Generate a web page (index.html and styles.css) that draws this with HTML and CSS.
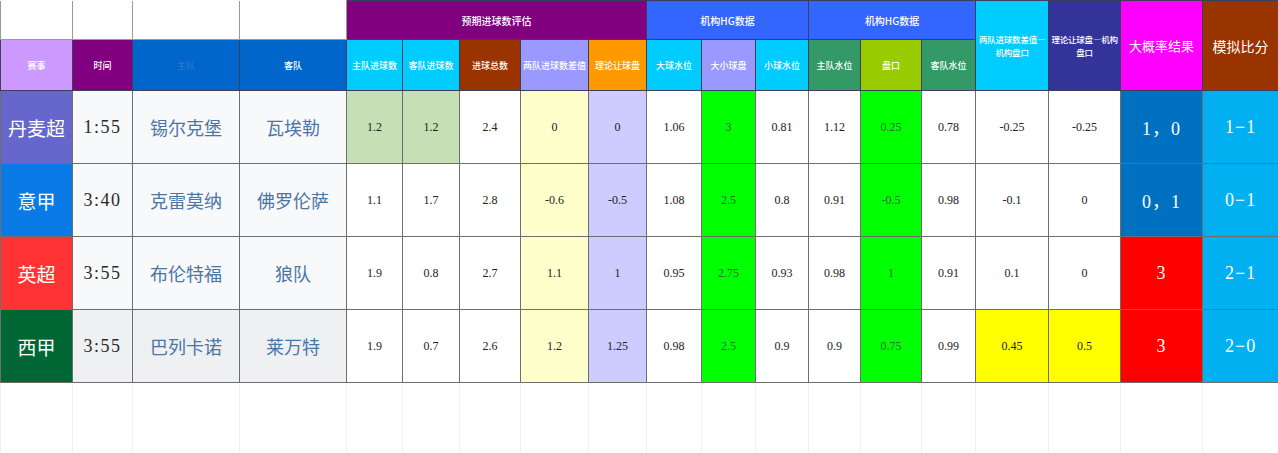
FILE: index.html
```html
<!DOCTYPE html>
<html lang="zh">
<head>
<meta charset="utf-8">
<title>预期进球数评估</title>
<link rel="stylesheet" href="styles.css">
</head>
<body>
<table class="sheet">
  <colgroup>
    <col style="width:72px"><col style="width:60px"><col style="width:107px"><col style="width:107px">
    <col style="width:56px"><col style="width:57px"><col style="width:61px"><col style="width:68px"><col style="width:58px">
    <col style="width:55px"><col style="width:54px"><col style="width:53px">
    <col style="width:52px"><col style="width:61px"><col style="width:54px">
    <col style="width:73px"><col style="width:72px"><col style="width:82px"><col style="width:76px">
  </colgroup>
  <thead>
    <tr class="h1">
      <th class="blank"></th><th class="blank"></th><th class="blank"></th><th class="blank"></th>
      <th colspan="5" class="g-purple">预期进球数评估</th>
      <th colspan="3" class="g-blue">机构HG数据</th>
      <th colspan="3" class="g-blue">机构HG数据</th>
      <th rowspan="2" class="c-cyan two">两队进球数差值—<br>机构盘口</th>
      <th rowspan="2" class="c-navy two">理论让球盘—机构<br>盘口</th>
      <th rowspan="2" class="c-magenta big">大概率结果</th>
      <th rowspan="2" class="c-brown bigger">模拟比分</th>
    </tr>
    <tr class="h2">
      <th class="c-lilac">赛事</th>
      <th class="c-purple">时间</th>
      <th class="c-teamblue faint">主队</th>
      <th class="c-teamblue">客队</th>
      <th class="c-sky">主队进球数</th>
      <th class="c-sky">客队进球数</th>
      <th class="c-brown">进球总数</th>
      <th class="c-periwinkle">两队进球数差值</th>
      <th class="c-orange">理论让球盘</th>
      <th class="c-sky">大球水位</th>
      <th class="c-periwinkle">大小球盘</th>
      <th class="c-sky">小球水位</th>
      <th class="c-sea">主队水位</th>
      <th class="c-lime">盘口</th>
      <th class="c-sea">客队水位</th>
    </tr>
  </thead>
  <tbody>
    <tr class="r">
      <td class="lg lg-dk">丹麦超</td><td class="time">1:55</td><td class="team">锡尔克堡</td><td class="team">瓦埃勒</td>
      <td class="num sage">1.2</td><td class="num sage">1.2</td><td class="num">2.4</td><td class="num cream">0</td><td class="num lav">0</td>
      <td class="num">1.06</td><td class="num green">3</td><td class="num">0.81</td>
      <td class="num">1.12</td><td class="num green">0.25</td><td class="num">0.78</td>
      <td class="num">-0.25</td><td class="num">-0.25</td>
      <td class="res res-blue">1，0</td><td class="res score">1−1</td>
    </tr>
    <tr class="r">
      <td class="lg lg-it">意甲</td><td class="time">3:40</td><td class="team">克雷莫纳</td><td class="team">佛罗伦萨</td>
      <td class="num">1.1</td><td class="num">1.7</td><td class="num">2.8</td><td class="num cream">-0.6</td><td class="num lav">-0.5</td>
      <td class="num">1.08</td><td class="num green">2.5</td><td class="num">0.8</td>
      <td class="num">0.91</td><td class="num green">-0.5</td><td class="num">0.98</td>
      <td class="num">-0.1</td><td class="num">0</td>
      <td class="res res-blue">0，1</td><td class="res score">0−1</td>
    </tr>
    <tr class="r">
      <td class="lg lg-en">英超</td><td class="time">3:55</td><td class="team">布伦特福</td><td class="team">狼队</td>
      <td class="num">1.9</td><td class="num">0.8</td><td class="num">2.7</td><td class="num cream">1.1</td><td class="num lav">1</td>
      <td class="num">0.95</td><td class="num green">2.75</td><td class="num">0.93</td>
      <td class="num">0.98</td><td class="num green">1</td><td class="num">0.91</td>
      <td class="num">0.1</td><td class="num">0</td>
      <td class="res res-red">3</td><td class="res score">2−1</td>
    </tr>
    <tr class="r last">
      <td class="lg lg-es">西甲</td><td class="time alt">3:55</td><td class="team alt">巴列卡诺</td><td class="team alt">莱万特</td>
      <td class="num">1.9</td><td class="num">0.7</td><td class="num">2.6</td><td class="num cream">1.2</td><td class="num lav">1.25</td>
      <td class="num">0.98</td><td class="num green">2.5</td><td class="num">0.9</td>
      <td class="num">0.9</td><td class="num green">0.75</td><td class="num">0.99</td>
      <td class="num yellow">0.45</td><td class="num yellow">0.5</td>
      <td class="res res-red">3</td><td class="res score">2−0</td>
    </tr>
    <tr class="empty">
      <td></td><td></td><td></td><td></td><td></td><td></td><td></td><td></td><td></td><td></td>
      <td></td><td></td><td></td><td></td><td></td><td></td><td></td><td></td><td></td>
    </tr>
  </tbody>
</table>
</body>
</html>
```
FILE: styles.css
```css
html, body {
  margin: 0;
  padding: 0;
  background: #ffffff;
}
body {
  font-family: "Liberation Serif", "Noto Sans CJK SC", serif;
  overflow: hidden;
}
.sheet {
  width: 1278px;
  table-layout: fixed;
  border-collapse: collapse;
  border-spacing: 0;
}
.sheet th, .sheet td {
  padding: 0;
  text-align: center;
  vertical-align: middle;
  overflow: hidden;
  white-space: nowrap;
}
.sheet th {
  font-family: "Noto Sans CJK SC", sans-serif;
  font-weight: 500;
  color: #ffffff;
  font-size: 9px;
  border: 1px solid #3d3d5c;
}
.h1 { height: 39px; }
.h2 { height: 51px; }
.h1 th { font-size: 10px; }
.h1 th.blank {
  background: #ffffff;
  border: 1px solid #9a9a9a;
  border-top: none;
}
.g-purple { background: #800080; }
.g-blue { background: #3366ff; }
.c-cyan { background: #00ccff; }
.c-navy { background: #333399; }
.c-magenta { background: #ff00ff; }
.c-brown { background: #993300; }
.c-lilac { background: #cc99ff; }
.c-purple { background: #800080; }
.c-teamblue { background: #0066cc; }
.c-sky { background: #00ccff; }
.c-periwinkle { background: #9999ff; }
.c-orange { background: #ff9900; }
.c-sea { background: #339966; }
.c-lime { background: #99cc00; }
.sheet th.two {
  white-space: nowrap;
  font-size: 8.5px;
  line-height: 13px;
  letter-spacing: -0.2px;
}
.sheet th.big { font-size: 13px; font-weight: 400; }
.sheet th.bigger { font-size: 14px; font-weight: 400; }
.sheet th.faint { color: #2a78d0; }

.r { height: 73px; }
.r td {
  border: 1px solid #6e6e6e;
  color: #222222;
  background: #ffffff;
}
.lg {
  font-family: "Noto Sans CJK SC", sans-serif;
  font-size: 19px;
  color: #ffffff !important;
}
.lg-dk { background: #6666cc !important; }
.lg-it { background: #0a7be6 !important; }
.lg-en { background: #ff3333 !important; }
.lg-es { background: #006633 !important; }
.time {
  font-family: "Liberation Serif", "Noto Sans CJK SC", serif;
  font-size: 18px;
  letter-spacing: 1.5px;
  background: #f8f9fb !important;
  color: #2a2a2a !important;
}
.team {
  font-family: "Noto Sans CJK SC", sans-serif;
  font-size: 18px;
  color: #4a76a6 !important;
  background: #f8f9fb !important;
}
.alt { background: #eef0f2 !important; }
.num { font-size: 12px; }
.sage { background: #c6dfb4 !important; }
.cream { background: #ffffcc !important; }
.lav { background: #ccccff !important; }
.green { background: #00ff00 !important; color: #2f6b2f !important; }
.yellow { background: #ffff00 !important; }
.res {
  font-size: 18px;
  color: #ffffff !important;
  letter-spacing: 1px;
}
.res-blue { background: #0070c0 !important; }
.res-red { background: #ff0000 !important; }
.score { background: #00b0f0 !important; }

.empty { height: 72px; }
.empty td {
  border-left: 1px solid #f0f0f0;
  border-right: 1px solid #f0f0f0;
  border-top: 1px solid #9a9a9a;
  border-bottom: 1px solid #f0f0f0;
}
```
